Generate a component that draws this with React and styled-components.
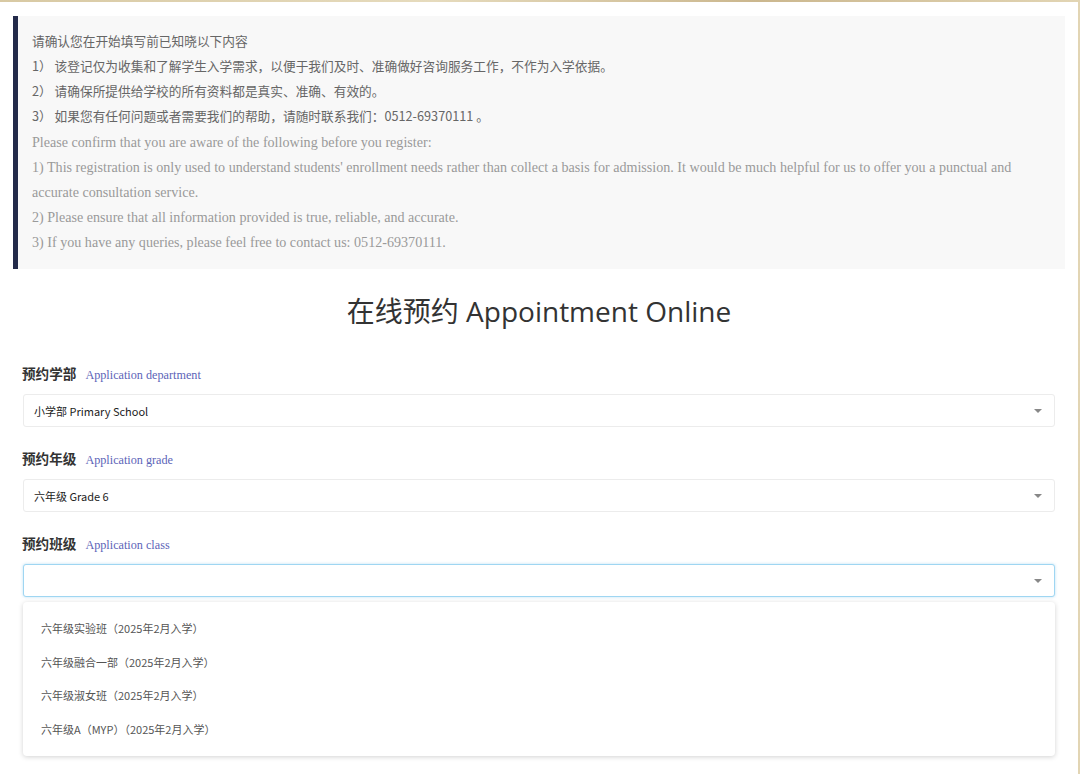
import React from 'react';
import styled, { createGlobalStyle } from 'styled-components';

const GlobalStyle = createGlobalStyle`
  html, body {
    margin: 0;
    padding: 0;
    background: linear-gradient(90deg, #d8c9a3, #e6dbbd 40%, #cbb78e 70%, #e2d5b4);
  }
`;

const Page = styled.div`
  background: #fff;
  margin: 2px 2px 0 0;
  min-height: 772px;
  padding: 14px 13px 0 13px;
  box-sizing: border-box;
  font-family: "Noto Sans CJK SC", sans-serif;
`;

const Notice = styled.div`
  background: #f8f8f8;
  border-left: 5px solid #232a4a;
  padding: 14px 40px 14px 14px;
  line-height: 25px;
  color: #666;
`;

const CnLine = styled.div`
  font-family: "Noto Sans CJK SC", sans-serif;
  font-size: 12.7px;
  line-height: 21px;
  padding-bottom: 4px;
`;

const EnLine = styled.div`
  font-family: "Liberation Serif", "Noto Sans CJK SC", serif;
  font-size: 14.1px;
  color: #9a9a9a;
`;

const Title = styled.h1`
  margin: 22px 0 0 0;
  text-align: center;
  font-weight: 400;
  font-size: 28px;
  line-height: 40px;
  color: #333;
  font-family: "Open Sans", "Noto Sans CJK SC", sans-serif;
`;

const Form = styled.div`
  padding: 32px 10px 0 10px;
`;

const Field = styled.div`
  margin-bottom: 21px;
`;

const Label = styled.div`
  display: flex;
  align-items: baseline;
  gap: 9px;
  height: 20px;
  margin-bottom: 11px;
  margin-left: -1px;
`;

const LabelCn = styled.span`
  font-size: 13.6px;
  font-weight: 700;
  color: #333;
`;

const LabelEn = styled.span`
  font-family: "Liberation Serif", serif;
  font-size: 12.2px;
  color: #5c64b8;
`;

const Select = styled.div`
  height: 33px;
  box-sizing: border-box;
  border: 1px solid ${p => (p.$focused ? '#9fd6f2' : '#ececec')};
  box-shadow: ${p => (p.$focused ? '0 0 3px rgba(102, 185, 230, 0.45)' : 'none')};
  border-radius: 3px;
  display: flex;
  align-items: center;
  padding: 0 10px;
  font-size: 11px;
  color: #222;
  background: #fff;
`;

const SelectText = styled.span`
  flex: 1;
`;

const Caret = styled.span`
  width: 0;
  height: 0;
  border-left: 4px solid transparent;
  border-right: 4px solid transparent;
  border-top: 4px solid #888;
  margin-right: 2px;
`;

const Menu = styled.div`
  margin-top: 5px;
  background: #fff;
  border-radius: 4px;
  box-shadow: 0 1px 5px rgba(0, 0, 0, 0.18);
  padding: 9px 0 10px;
`;

const MenuItem = styled.div`
  height: 33.7px;
  display: flex;
  align-items: center;
  padding-left: 18px;
  font-size: 11px;
  color: #555;
`;

const fields = [
  { cn: '预约学部', en: 'Application department', value: '小学部 Primary School' },
  { cn: '预约年级', en: 'Application grade', value: '六年级 Grade 6' },
];

const classes = [
  '六年级实验班（2025年2月入学）',
  '六年级融合一部（2025年2月入学）',
  '六年级淑女班（2025年2月入学）',
  '六年级A（MYP）（2025年2月入学）',
];

export default function App() {
  return (
    <>
      <GlobalStyle />
      <Page>
        <Notice>
          <CnLine>请确认您在开始填写前已知晓以下内容</CnLine>
          <CnLine>1）&nbsp;该登记仅为收集和了解学生入学需求，以便于我们及时、准确做好咨询服务工作，不作为入学依据。</CnLine>
          <CnLine>2）&nbsp;请确保所提供给学校的所有资料都是真实、准确、有效的。</CnLine>
          <CnLine>3）&nbsp;如果您有任何问题或者需要我们的帮助，请随时联系我们：0512-69370111 。</CnLine>
          <EnLine>Please confirm that you are aware of the following before you register:</EnLine>
          <EnLine>
            1) This registration is only used to understand students' enrollment needs rather than collect a basis for admission. It would be much helpful for us to offer you a punctual and accurate consultation service.
          </EnLine>
          <EnLine>2) Please ensure that all information provided is true, reliable, and accurate.</EnLine>
          <EnLine>3) If you have any queries, please feel free to contact us: 0512-69370111.</EnLine>
        </Notice>

        <Title>在线预约 Appointment Online</Title>

        <Form>
          {fields.map(f => (
            <Field key={f.cn}>
              <Label>
                <LabelCn>{f.cn}</LabelCn>
                <LabelEn>{f.en}</LabelEn>
              </Label>
              <Select>
                <SelectText>{f.value}</SelectText>
                <Caret />
              </Select>
            </Field>
          ))}
          <Field>
            <Label>
              <LabelCn>预约班级</LabelCn>
              <LabelEn>Application class</LabelEn>
            </Label>
            <Select $focused>
              <SelectText />
              <Caret />
            </Select>
            <Menu>
              {classes.map(c => (
                <MenuItem key={c}>{c}</MenuItem>
              ))}
            </Menu>
          </Field>
        </Form>
      </Page>
    </>
  );
}
